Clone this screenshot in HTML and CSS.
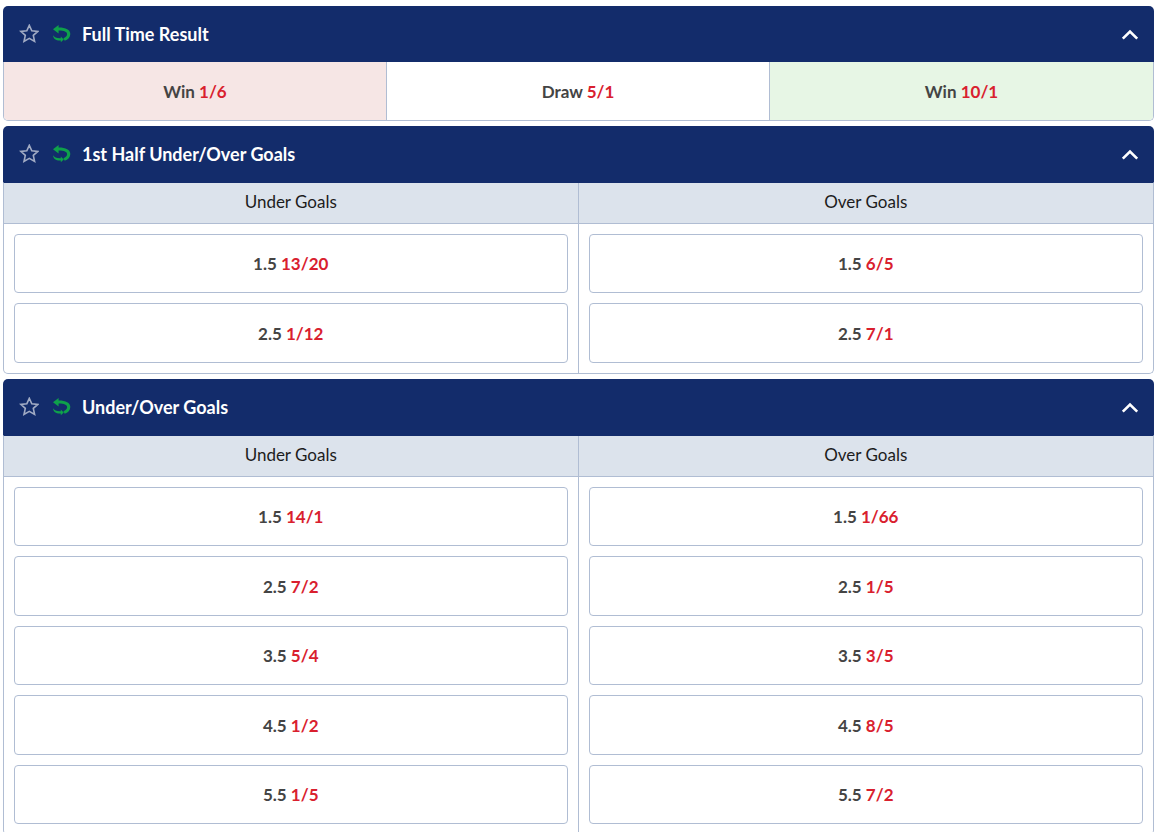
FILE: index.html
```html
<!DOCTYPE html>
<html lang="en">
<head>
    <meta charset="UTF-8">
    <title>Match Markets</title>
    <link rel="stylesheet" href="styles.css">
</head>
<body>
<!-- shared icons -->
<svg class="sprite" aria-hidden="true">
    <symbol id="star" viewBox="0 0 20 20">
        <path d="M10.300 1.300l2.500 5.500 6 .6-4.500 4 1.300 6.100-5.300-3.100L5 17.500l1.300-6.100-4.500-4 6-.6z" fill="none" stroke="currentColor" stroke-width="1.600"/>
    </symbol>
    <symbol id="cashout" viewBox="0 0 20 20">
        <path d="M2 5.200L7.600.9v2.500C14.500 3.300 19.300 5.600 19.300 10c0 3.300-2.300 5.600-5.600 6.800l-1.300-2.500c2.300-.9 3.700-2.200 3.700-4 0-2.700-3.500-3.800-8.500-3.700v2.900z" fill="currentColor"/>
        <path d="M2 11.300c1.300 2.200 4 3.200 7.800 3v-1.900l3 3-3 2.900v-1.800C5.300 16.900 2.400 15 2 11.300z" fill="currentColor"/>
    </symbol>
    <symbol id="chevron" viewBox="0 0 18 14">
        <path d="M1.800 11.700L9 4.500l7.200 7.200" fill="none" stroke="currentColor" stroke-width="2.600"/>
    </symbol>
</svg>

<main class="markets">
    <section class="market">
        <header class="market-header">
            <button class="icon-btn favourite" type="button" aria-label="Favourite"><svg><use href="#star"/></svg></button>
            <svg class="cashout"><use href="#cashout"/></svg>
            <h2 class="market-title">Full Time Result</h2>
            <button class="icon-btn toggle" type="button" aria-label="Collapse"><svg><use href="#chevron"/></svg></button>
        </header>
        <div class="market-body outcomes">
            <button class="outcome home" type="button">Win <span class="odds">1/6</span></button>
            <button class="outcome" type="button">Draw <span class="odds">5/1</span></button>
            <button class="outcome away" type="button">Win <span class="odds">10/1</span></button>
        </div>
    </section>

    <section class="market">
        <header class="market-header">
            <button class="icon-btn favourite" type="button" aria-label="Favourite"><svg><use href="#star"/></svg></button>
            <svg class="cashout"><use href="#cashout"/></svg>
            <h2 class="market-title">1st Half Under/Over Goals</h2>
            <button class="icon-btn toggle" type="button" aria-label="Collapse"><svg><use href="#chevron"/></svg></button>
        </header>
        <div class="market-body columns">
            <div class="column">
                <h3 class="column-title">Under Goals</h3>
                <div class="bets">
                    <button class="bet" type="button">1.5 <span class="odds">13/20</span></button>
                    <button class="bet" type="button">2.5 <span class="odds">1/12</span></button>
                </div>
            </div>
            <div class="column">
                <h3 class="column-title">Over Goals</h3>
                <div class="bets">
                    <button class="bet" type="button">1.5 <span class="odds">6/5</span></button>
                    <button class="bet" type="button">2.5 <span class="odds">7/1</span></button>
                </div>
            </div>
        </div>
    </section>

    <section class="market">
        <header class="market-header">
            <button class="icon-btn favourite" type="button" aria-label="Favourite"><svg><use href="#star"/></svg></button>
            <svg class="cashout"><use href="#cashout"/></svg>
            <h2 class="market-title">Under/Over Goals</h2>
            <button class="icon-btn toggle" type="button" aria-label="Collapse"><svg><use href="#chevron"/></svg></button>
        </header>
        <div class="market-body columns">
            <div class="column">
                <h3 class="column-title">Under Goals</h3>
                <div class="bets">
                    <button class="bet" type="button">1.5 <span class="odds">14/1</span></button>
                    <button class="bet" type="button">2.5 <span class="odds">7/2</span></button>
                    <button class="bet" type="button">3.5 <span class="odds">5/4</span></button>
                    <button class="bet" type="button">4.5 <span class="odds">1/2</span></button>
                    <button class="bet" type="button">5.5 <span class="odds">1/5</span></button>
                </div>
            </div>
            <div class="column">
                <h3 class="column-title">Over Goals</h3>
                <div class="bets">
                    <button class="bet" type="button">1.5 <span class="odds">1/66</span></button>
                    <button class="bet" type="button">2.5 <span class="odds">1/5</span></button>
                    <button class="bet" type="button">3.5 <span class="odds">3/5</span></button>
                    <button class="bet" type="button">4.5 <span class="odds">8/5</span></button>
                    <button class="bet" type="button">5.5 <span class="odds">7/2</span></button>
                </div>
            </div>
        </div>
    </section>
</main>
</body>
</html>
```
FILE: styles.css
```css
*{
    box-sizing:border-box;
}

body{
    margin:0;
    height:100vh;
    overflow:hidden;
    background:#fff;
    font-family:Lato, "Open Sans", sans-serif;
    color:#444;
}

button{
    margin:0;
    padding:0;
    border:0;
    background:none;
    font:inherit;
    color:inherit;
    cursor:pointer;
}

.sprite{
    display:none;
}

.markets{
    display:flex;
    flex-direction:column;
    gap:5px;
    padding:6px 5px 6px 3px;
}

/* header bar */
.market-header{
    display:flex;
    align-items:center;
    height:56px;
    padding:0 15px 0 16px;
    background:#132c6b;
    border-radius:5px 5px 0 0;
    color:#fff;
}

.market-title{
    flex:1;
    margin:0;
    font-size:18px;
    font-weight:bold;
    line-height:24px;
}

.icon-btn{
    display:flex;
}

.favourite{
    color:#a1abc4;
}

.favourite svg,
.cashout{
    width:20px;
    height:20px;
}

.cashout{
    margin:0 11px 0 12px;
    color:#0fa14b;
}

.toggle svg{
    width:18px;
    height:14px;
}

/* market content */
.market-body{
    display:grid;
    border:1px solid #b0bdd3;
    border-top:0;
    border-radius:0 0 5px 5px;
    overflow:hidden;
}

.outcomes{
    grid-template-columns:1fr 1fr 1fr;
}

.outcome{
    height:58px;
}

.outcome,
.bet{
    font-size:17px;
    font-weight:bold;
}

.outcome:not(:last-child),
.column:not(:last-child){
    border-right:1px solid #b0bdd3;
}

.home{
    background:#f6e6e5;
}

.away{
    background:#e7f6e5;
}

.odds{
    color:#d9202e;
}

.columns{
    grid-template-columns:1fr 1fr;
    border-top:1px solid #132c6b;
}

.column-title{
    margin:0;
    padding:7px 0 9px;
    border-bottom:1px solid #b0bdd3;
    background:#dce3ec;
    color:#1c1c1c;
    font-size:17px;
    font-weight:normal;
    line-height:24px;
    text-align:center;
}

.bets{
    display:flex;
    flex-direction:column;
    gap:10px;
    padding:10px;
}

.bet{
    height:59px;
    border:1px solid #b0bdd3;
    border-radius:4px;
    background:#fff;
}

.bet:nth-child(even){
    height:60px;
}
```
